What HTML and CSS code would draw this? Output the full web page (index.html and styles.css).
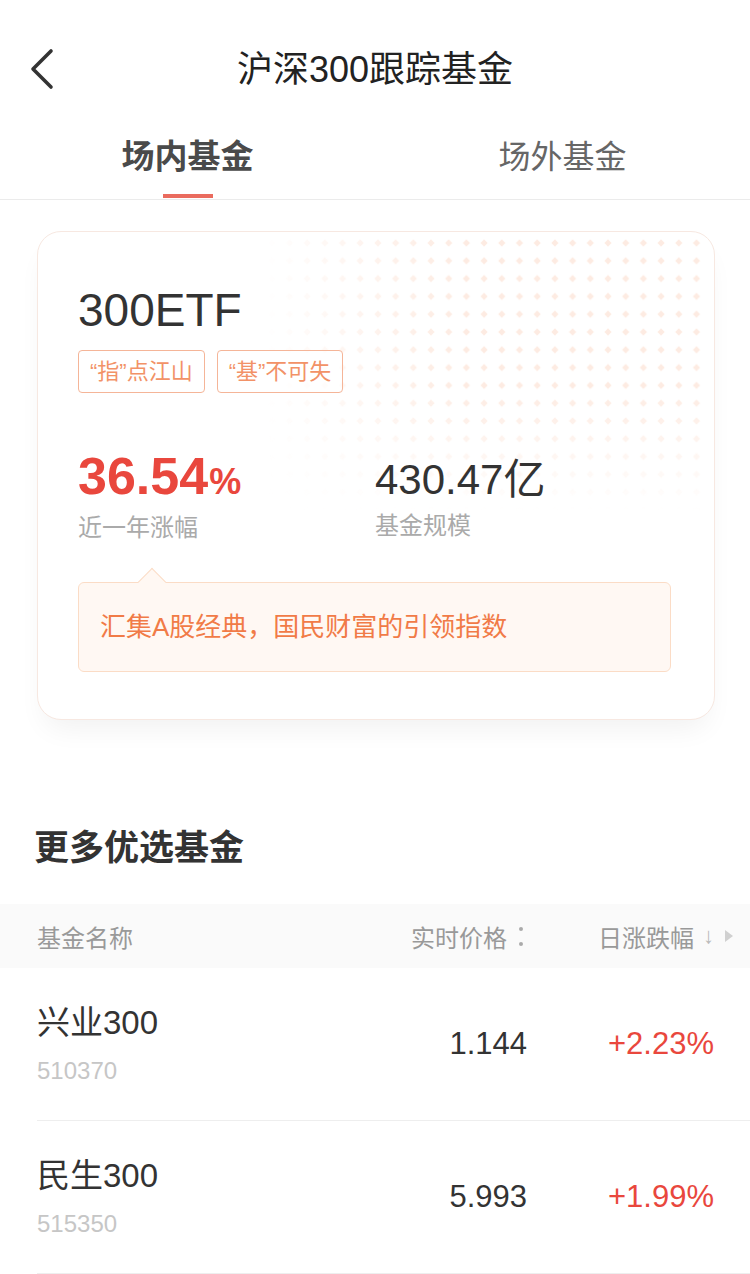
FILE: index.html
```html
<!DOCTYPE html>
<html lang="zh-CN">
<head>
<meta charset="utf-8">
<title>沪深300跟踪基金</title>
<link rel="stylesheet" href="styles.css">
</head>
<body>
<div class="page">
  <header class="nav">
    <div class="nav-back">
      <svg width="30" height="44" viewBox="0 0 30 44"><polyline points="22,3 4,21 22,39" fill="none" stroke="#333" stroke-width="3.6" stroke-linecap="round" stroke-linejoin="round"/></svg>
    </div>
    <h1 class="nav-title">沪深300跟踪基金</h1>
    <div class="nav-side"></div>
  </header>

  <nav class="tabs">
    <div class="tab tab-active"><span class="tab-text">场内基金</span><span class="tab-bar"></span></div>
    <div class="tab"><span class="tab-text">场外基金</span></div>
  </nav>

  <section class="card">
    <div class="card-dots">
      <svg class="card-dots-svg" width="442" height="275" viewBox="0 0 442 275">
        <defs>
          <pattern id="dots" x="334.15" y="-1.9" width="17.7" height="17.8" patternUnits="userSpaceOnUse">
            <polygon points="8.85,5.3 12.45,8.9 8.85,12.5 5.25,8.9" fill="#fdebe2"/>
          </pattern>
        </defs>
        <rect x="0" y="0" width="442" height="275" fill="url(#dots)"/>
      </svg>
    </div>
    <div class="card-body">
      <div class="fund-name">300ETF</div>
      <div class="tags">
        <span class="tag">“指”点江山</span>
        <span class="tag">“基”不可失</span>
      </div>
      <div class="stats">
        <div class="stat stat-first">
          <div class="stat-value stat-up">36.54<span class="stat-pct">%</span></div>
          <div class="stat-label">近一年涨幅</div>
        </div>
        <div class="stat">
          <div class="stat-value stat-size">430.47亿</div>
          <div class="stat-label">基金规模</div>
        </div>
      </div>
      <div class="tip"><span class="tip-arrow"></span>汇集A股经典，国民财富的引领指数</div>
    </div>
  </section>

  <h2 class="section-title">更多优选基金</h2>

  <div class="table-head">
    <div class="th th-name">基金名称</div>
    <div class="th th-price">实时价格<svg class="th-more" width="8" height="26" viewBox="0 0 8 26"><circle cx="4" cy="6" r="2" fill="#aaa"/><circle cx="4" cy="21" r="2" fill="#aaa"/></svg></div>
    <div class="th th-change">日涨跌幅<span class="th-arrow">↓</span><svg class="th-tri" width="10" height="14" viewBox="0 0 10 14"><polygon points="1,1 9,7 1,13" fill="#d0d0d0"/></svg></div>
  </div>

  <div class="row">
    <div class="cell-name">
      <div class="fund-title">兴业300</div>
      <div class="fund-code">510370</div>
    </div>
    <div class="cell-price">1.144</div>
    <div class="cell-change">+2.23%</div>
  </div>
  <div class="row">
    <div class="cell-name">
      <div class="fund-title">民生300</div>
      <div class="fund-code">515350</div>
    </div>
    <div class="cell-price">5.993</div>
    <div class="cell-change">+1.99%</div>
  </div>
</div>
</body>
</html>
```

FILE: styles.css
```css
* { box-sizing: border-box; }

html, body {
  margin: 0;
  padding: 0;
  background: #fff;
}

body {
  font-family: "Liberation Sans", "Noto Sans CJK SC", sans-serif;
  color: #333;
}

.page {
  width: 750px;
  overflow: hidden;
}

/* nav */
.nav {
  display: grid;
  grid-template-columns: 110px 1fr 110px;
  align-items: center;
  height: 100px;
  margin-top: 20px;
}

.nav-back {
  display: flex;
  align-items: center;
  padding-left: 29px;
}

.nav-back svg { display: block; }

.nav-title {
  margin: 0;
  text-align: center;
  font-size: 36px;
  font-weight: normal;
  line-height: 100px;
  color: #222;
}

/* tabs */
.tabs {
  display: grid;
  grid-template-columns: 1fr 1fr;
  height: 80px;
  border-bottom: 1px solid #ebebeb;
}

.tab {
  display: flex;
  flex-direction: column;
  align-items: center;
  padding-top: 15px;
}

.tab-text {
  font-size: 32px;
  line-height: 44px;
  color: #666;
}

.tab-active .tab-text {
  font-size: 33px;
  font-weight: bold;
  color: #4a4a4a;
}

.tab-bar {
  display: block;
  width: 50px;
  height: 4px;
  margin-top: 15px;
  background: #ea6b5e;
}

/* card */
.card {
  position: relative;
  margin: 31px 35px 0 37px;
  border: 1px solid #f7e8e1;
  border-radius: 24px;
  background: #fff;
  box-shadow: 0 16px 28px -8px rgba(0, 0, 0, 0.06);
  overflow: hidden;
}

.card-dots {
  position: absolute;
  left: 227px;
  top: 4px;
  width: 442px;
  height: 275px;
  -webkit-mask-image: linear-gradient(to right, transparent 0%, rgba(0,0,0,0.5) 20%, #000 45%);
  mask-image: linear-gradient(to right, transparent 0%, rgba(0,0,0,0.5) 20%, #000 45%);
}

.card-dots-svg {
  display: block;
  -webkit-mask-image: linear-gradient(to bottom, #000 0%, #000 55%, transparent 100%);
  mask-image: linear-gradient(to bottom, #000 0%, #000 55%, transparent 100%);
}

.card-body {
  position: relative;
  padding: 55px 43px 47px 40px;
}

.fund-name {
  font-size: 46px;
  line-height: 46px;
  color: #333;
}

.tags {
  display: flex;
  gap: 12px;
  margin-top: 17px;
}

.tag {
  display: block;
  height: 43px;
  padding: 0 11px;
  border: 1px solid #f5b598;
  border-radius: 4px;
  font-size: 22px;
  line-height: 41px;
  color: #f29267;
  background: rgba(255, 255, 255, 0.6);
}

.stats {
  display: flex;
  align-items: baseline;
  margin-top: 53px;
}

.stat-first { width: 297px; }

.stat-value {
  line-height: 60px;
  white-space: nowrap;
}

.stat-up {
  font-size: 52px;
  font-weight: bold;
  color: #e9473d;
}

.stat-pct {
  font-size: 36px;
  margin-left: 1px;
}

.stat-size {
  font-size: 42px;
  color: #333;
}

.stat-label {
  margin-top: 0;
  font-size: 24px;
  line-height: 32px;
  color: #aaa;
}

.tip {
  position: relative;
  margin-top: 38px;
  height: 90px;
  padding-left: 21px;
  border: 1px solid #fbdcc6;
  border-radius: 6px;
  background: #fff8f3;
  font-size: 26px;
  line-height: 88px;
  color: #f17b47;
}

.tip-arrow {
  position: absolute;
  left: 63px;
  top: -11px;
  width: 20px;
  height: 20px;
  background: #fff8f3;
  border-top: 1px solid #fbdcc6;
  border-left: 1px solid #fbdcc6;
  transform: rotate(45deg);
}

/* section */
.section-title {
  margin: 103px 0 0 0;
  padding-left: 34px;
  font-size: 35px;
  font-weight: bold;
  line-height: 50px;
  color: #333;
}

.table-head {
  display: grid;
  grid-template-columns: 1fr 160px 207px;
  align-items: center;
  height: 64px;
  margin-top: 31px;
  padding: 0 16px 0 37px;
  background: #fafafa;
  font-size: 24px;
  color: #999;
}

.th {
  display: flex;
  align-items: center;
  white-space: nowrap;
}

.th-price, .th-change { justify-content: flex-end; }

.th-more {
  display: block;
  margin-left: 10px;
  margin-right: 2px;
}

.th-arrow {
  margin-left: 9px;
  font-size: 22px;
  color: #bbb;
}

.th-tri {
  display: block;
  margin-left: 10px;
}

.row {
  display: grid;
  grid-template-columns: 1fr 160px 187px;
  align-items: center;
  height: 153px;
  margin-left: 37px;
  padding-right: 36px;
  border-bottom: 1px solid #eeeeee;
}

.fund-title {
  font-size: 33px;
  line-height: 40px;
  color: #333;
}

.fund-code {
  margin-top: 13px;
  font-size: 24px;
  line-height: 30px;
  color: #c6c6c6;
}

.cell-price, .cell-change {
  text-align: right;
  font-size: 31px;
  line-height: 40px;
}

.cell-price { color: #333; }

.cell-change { color: #e9473d; }
```
